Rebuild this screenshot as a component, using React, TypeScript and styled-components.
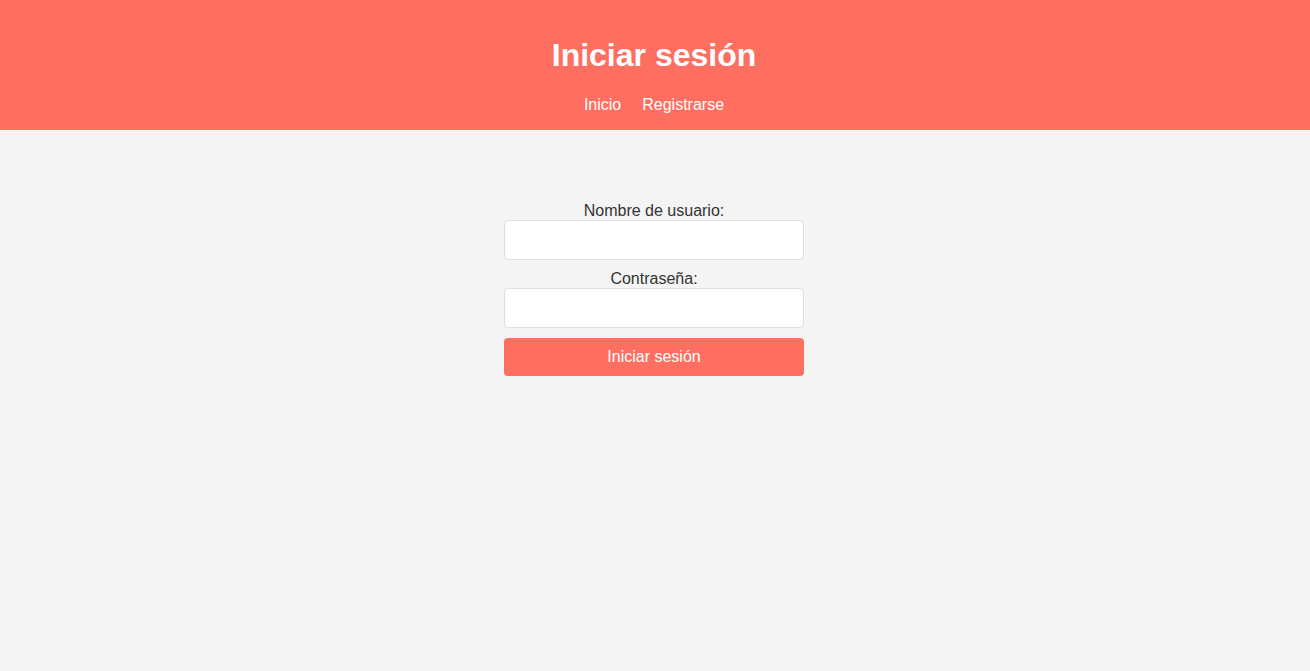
import React from "react";
import styled, { createGlobalStyle } from "styled-components";

//  styled-components
// ----------------------------------------------
const GlobalStyle = createGlobalStyle`
  html, body {
    margin: 0;
    padding: 0;
    background: #f4f4f4;
    font-family: "Liberation Sans", Arial, sans-serif;
    color: #333;
  }
  * {
    box-sizing: border-box;
  }
`;

const Header = styled.header`
  background: #ff6f61;
  color: #fff;
  text-align: center;
  padding: 16px 2px 16px 0;
`;

const Title = styled.h1`
  margin: 21px 0 22px;
  font-size: 32px;
  font-weight: bold;
`;

const Nav = styled.nav`
  display: flex;
  justify-content: center;
  gap: 21px;
`;

const NavLink = styled.a`
  color: #fff;
  text-decoration: none;
  font-size: 16px;
`;

const Main = styled.main`
  display: flex;
  justify-content: center;
  padding: 71px 2px 0 0;
`;

const Form = styled.form`
  display: flex;
  flex-direction: column;
  width: 300px;
  text-align: center;
`;

const Label = styled.label`
  display: block;
  font-size: 16px;
  line-height: 19px;
`;

const Input = styled.input`
  width: 100%;
  height: 40px;
  padding: 10px;
  margin: 0 0 9px;
  border: 1px solid #ddd;
  border-radius: 4px;
  background: #fff;
  font-family: inherit;
  font-size: 16px;
`;

const Button = styled.button`
  width: 100%;
  height: 38px;
  margin-top: 1px;
  border: none;
  border-radius: 4px;
  background: #ff6f61;
  color: #fff;
  font-family: inherit;
  font-size: 16px;
  cursor: pointer;
`;
// ----------------------------------------------

const App = () => {
  return (
    <>
      <GlobalStyle />
      <Header>
        <Title>Iniciar sesión</Title>
        <Nav>
          <NavLink href="#">Inicio</NavLink>
          <NavLink href="#">Registrarse</NavLink>
        </Nav>
      </Header>
      <Main>
        <Form onSubmit={(e) => e.preventDefault()}>
          <Label htmlFor="username">Nombre de usuario:</Label>
          <Input id="username" type="text" />
          <Label htmlFor="password">Contraseña:</Label>
          <Input id="password" type="password" />
          <Button type="submit">Iniciar sesión</Button>
        </Form>
      </Main>
    </>
  );
};

export default App;
